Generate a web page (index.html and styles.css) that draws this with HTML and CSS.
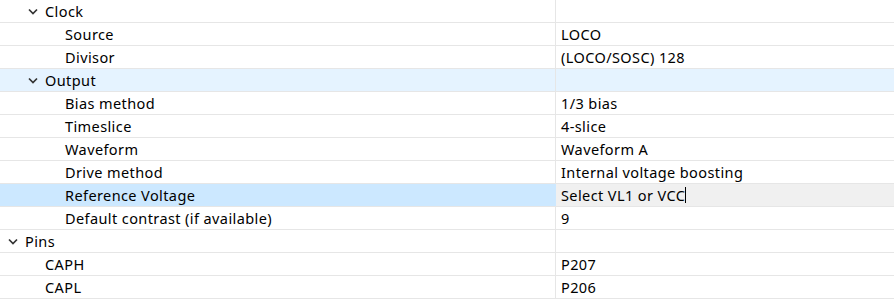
FILE: index.html
```html
<!DOCTYPE html>
<html>
<head>
<meta charset="utf-8">
<link rel="stylesheet" href="styles.css">
</head>
<body>
<div class="tree">
  <div class="row">
    <div class="key l1"><span class="chev"><svg width="10" height="7" viewBox="0 0 10 7"><path d="M1 1.5 L5 5.5 L9 1.5" fill="none" stroke="#333" stroke-width="1.7"/></svg></span>Clock</div>
    <div class="val"></div>
  </div>
  <div class="row">
    <div class="key l2">Source</div>
    <div class="val">LOCO</div>
  </div>
  <div class="row">
    <div class="key l2">Divisor</div>
    <div class="val">(LOCO/SOSC) 128</div>
  </div>
  <div class="row hover">
    <div class="key l1"><span class="chev"><svg width="10" height="7" viewBox="0 0 10 7"><path d="M1 1.5 L5 5.5 L9 1.5" fill="none" stroke="#333" stroke-width="1.7"/></svg></span>Output</div>
    <div class="val"></div>
  </div>
  <div class="row">
    <div class="key l2">Bias method</div>
    <div class="val">1/3 bias</div>
  </div>
  <div class="row">
    <div class="key l2">Timeslice</div>
    <div class="val">4-slice</div>
  </div>
  <div class="row">
    <div class="key l2">Waveform</div>
    <div class="val">Waveform A</div>
  </div>
  <div class="row">
    <div class="key l2">Drive method</div>
    <div class="val">Internal voltage boosting</div>
  </div>
  <div class="row selected">
    <div class="key l2">Reference Voltage</div>
    <div class="val edit">Select VL1 or VCC<span class="caret"></span></div>
  </div>
  <div class="row">
    <div class="key l2">Default contrast (if available)</div>
    <div class="val">9</div>
  </div>
  <div class="row">
    <div class="key l0"><span class="chev"><svg width="10" height="7" viewBox="0 0 10 7"><path d="M1 1.5 L5 5.5 L9 1.5" fill="none" stroke="#333" stroke-width="1.7"/></svg></span>Pins</div>
    <div class="val"></div>
  </div>
  <div class="row">
    <div class="key l1">CAPH</div>
    <div class="val">P207</div>
  </div>
  <div class="row">
    <div class="key l1">CAPL</div>
    <div class="val">P206</div>
  </div>
</div>
</body>
</html>
```
FILE: styles.css
```css
html, body {
  margin: 0;
  padding: 0;
  background: #ffffff;
}
.tree {
  font-family: "Noto Sans", "Open Sans", sans-serif;
  font-size: 14.5px;
  letter-spacing: 0.4px;
  color: #000;
  width: 894px;
}
.row {
  display: flex;
  height: 22px;
  border-bottom: 1px solid #e6e6e6;
}
.key {
  border-right: 1px solid #e6e6e6;
  display: flex;
  align-items: center;
  white-space: nowrap;
  flex: 0 0 auto;
}
.val {
  flex: 1;
  display: flex;
  align-items: center;
  padding-left: 5px;
  white-space: nowrap;
}
.l0 { padding-left: 25px; width: 530px; }
.l1 { padding-left: 45px; width: 510px; }
.l2 { padding-left: 65px; width: 490px; }
.key .chev {
  width: 17px;
  margin-left: -17px;
  display: inline-flex;
  align-items: center;
  justify-content: flex-start;
}
.hover .key, .hover .val {
  background: #e5f3ff;
}
.selected .key {
  background: #cce8ff;
  border-right-color: #cce8ff;
}
.selected .val {
  background: #f0f0f0;
}
.caret {
  display: inline-block;
  width: 1px;
  height: 16px;
  background: #000;
  margin-left: 0;
}
```
